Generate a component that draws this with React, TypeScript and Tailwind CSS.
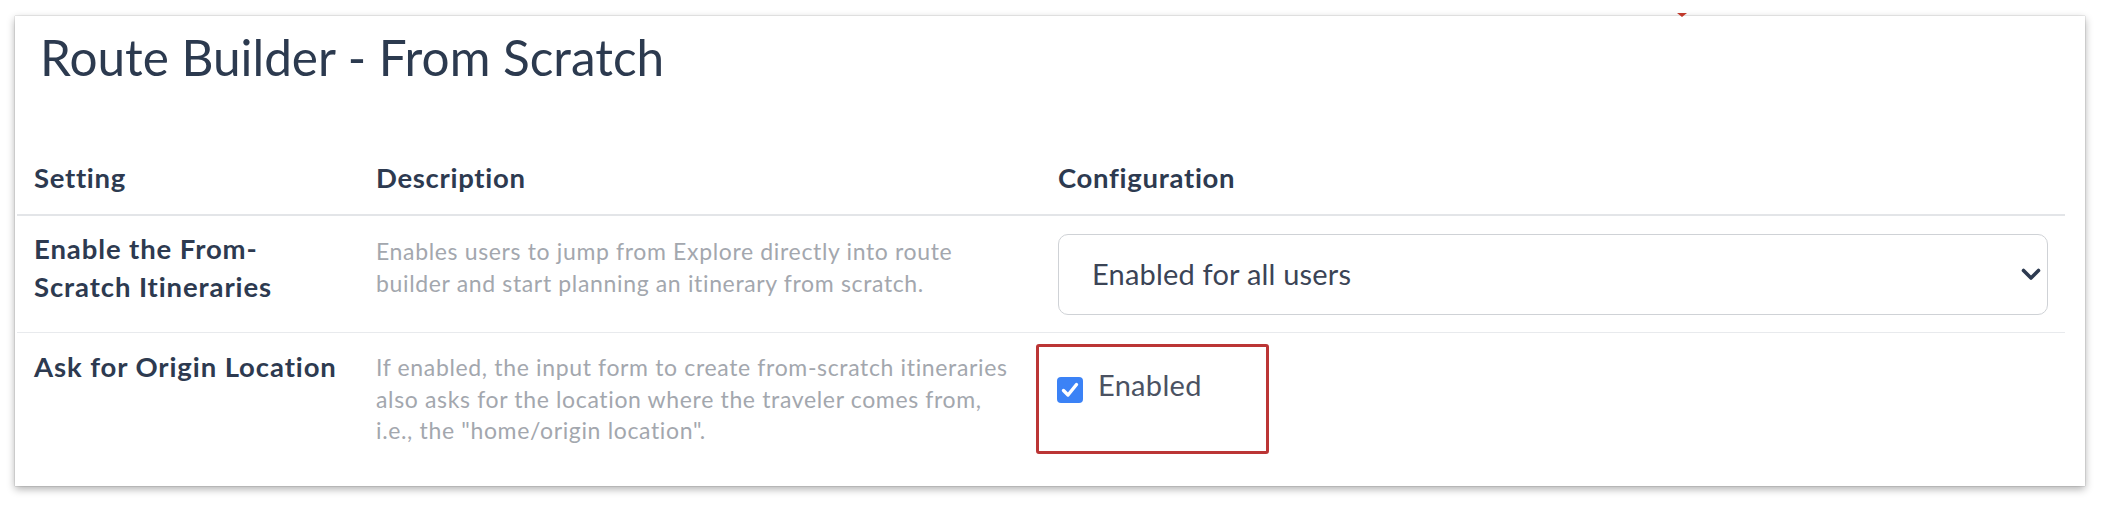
import React from "react";

const font = { fontFamily: "Lato, 'Noto Sans', sans-serif" };

function Chevron() {
  return (
    <svg width="20" height="13" viewBox="0 0 20 13" className="shrink-0">
      <path d="M2.5 2.5 L10 10 L17.5 2.5" fill="none" stroke="#2d3a50" strokeWidth="3.6" strokeLinecap="round" strokeLinejoin="round" />
    </svg>
  );
}

function Check() {
  return (
    <div className="w-[26px] h-[26px] rounded-[4px] bg-[#3b82f6] flex items-center justify-center shrink-0">
      <svg width="22" height="22" viewBox="0 0 22 22">
        <path d="M4.5 11.5 L9 16 L17.5 5.5" fill="none" stroke="#ffffff" strokeWidth="3.4" strokeLinecap="round" strokeLinejoin="round" />
      </svg>
    </div>
  );
}

export default function App() {
  return (
    <div className="w-[2106px] h-[508px] bg-white pt-[16px] pl-[15px]" style={font}>
      <div className="relative w-[2070px] h-[470px] bg-white shadow-[0_0_1px_rgba(0,0,0,0.4),0_3px_8px_rgba(0,0,0,0.32)] pl-[2px]">
        <div className="absolute left-[1662px] top-[-3px] w-0 h-0 border-l-[5px] border-l-transparent border-r-[5px] border-r-transparent border-t-[4px] border-t-[#c0392b]" />
        <div className="pl-[23px] pt-[12px] text-[49.5px] leading-[1.2] text-[#2c3a4f]">
          Route Builder - From Scratch
        </div>
        <div className="mt-[72px] w-[2048px]">
          <div className="grid grid-cols-[342px_682px_1024px] border-b-2 border-[#e3e5e8] text-[27.5px] tracking-[0.7px] font-bold leading-[38px] text-[#2d3a50]">
            <div className="px-[17px] pb-[17px]">Setting</div>
            <div className="px-[17px] pb-[17px]">Description</div>
            <div className="px-[17px] pb-[17px]">Configuration</div>
          </div>
          <div className="grid grid-cols-[342px_682px_1024px] border-b border-[#e8eaed] h-[117px]">
            <div className="px-[17px] pt-[14px] text-[27.5px] tracking-[0.9px] font-bold leading-[38px] text-[#2d3a50] whitespace-nowrap">
              Enable the From-
              <br />
              Scratch Itineraries
            </div>
            <div className="px-[17px] pt-[20px] text-[23px] tracking-[0.65px] leading-[31.5px] text-[#a3a7ae] whitespace-nowrap">
              Enables users to jump from Explore directly into route
              <br />
              builder and start planning an itinerary from scratch.
            </div>
            <div className="px-[17px] pt-[18px]">
              <div className="h-[81px] rounded-[10px] border-[1.5px] border-[#cfd2d6] flex items-center justify-between pl-[33px] pr-[6px]">
                <span className="text-[29px] tracking-[0.2px] leading-[1.2] text-[#3b4456]">Enabled for all users</span>
                <Chevron />
              </div>
            </div>
          </div>
          <div className="grid grid-cols-[342px_682px_1024px] h-[153px]">
            <div className="px-[17px] pt-[15px] text-[27.5px] tracking-[0.9px] font-bold leading-[38px] text-[#2d3a50] whitespace-nowrap">
              Ask for Origin Location
            </div>
            <div className="px-[17px] pt-[19px] text-[23px] tracking-[0.65px] leading-[31.5px] text-[#a3a7ae] whitespace-nowrap">
              If enabled, the input form to create from-scratch itineraries
              <br />
              also asks for the location where the traveler comes from,
              <br />
              i.e., the "home/origin location".
            </div>
            <div className="relative pl-[16px]">
              <div className="absolute left-[-5px] top-[11px] w-[233px] h-[110px] border-[3.5px] border-[#bb3535] rounded-[3px]" />
              <div className="flex items-start gap-[15px]">
                <div className="mt-[44px]">
                  <Check />
                </div>
                <span className="mt-[38px] text-[29px] tracking-[0.3px] leading-[28px] text-[#4b5262]">Enabled</span>
              </div>
            </div>
          </div>
        </div>
      </div>
    </div>
  );
}
